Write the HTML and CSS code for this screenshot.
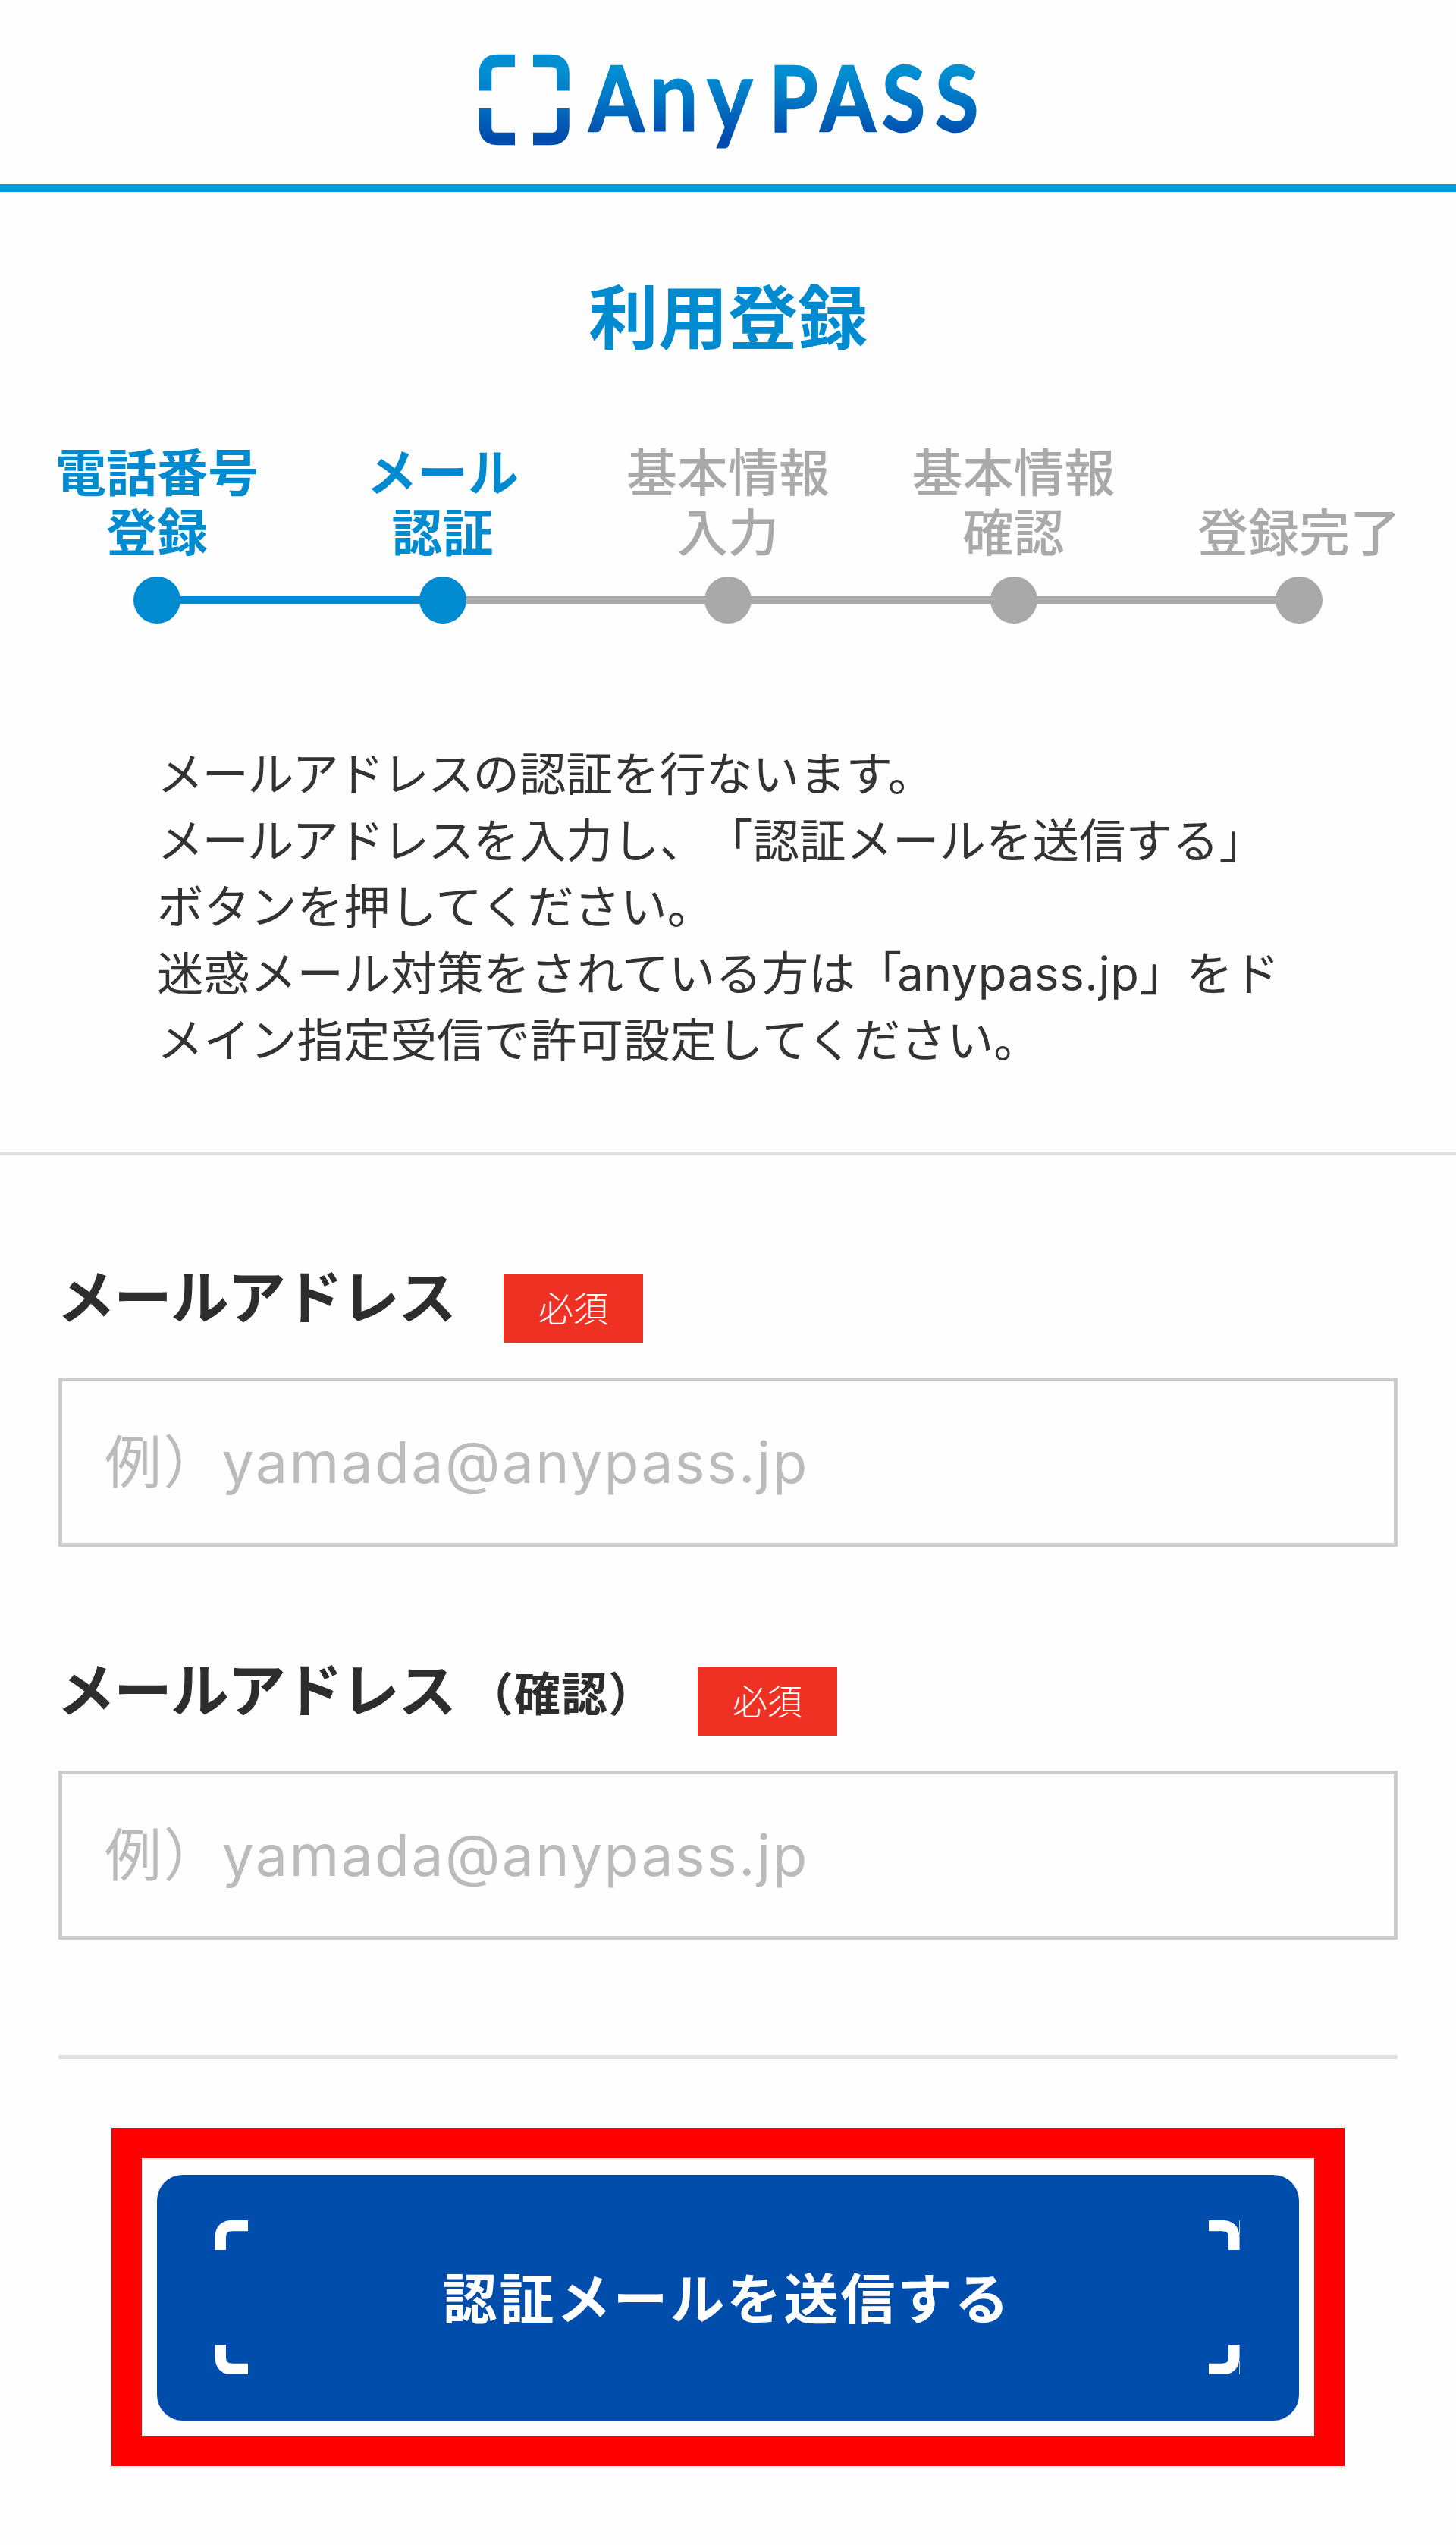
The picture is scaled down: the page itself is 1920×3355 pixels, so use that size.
FILE: index.html
```html
<!DOCTYPE html>
<html lang="ja">
<head>
    <meta charset="UTF-8">
    <meta name="viewport" content="width=device-width, initial-scale=1.0">
    <title>利用登録 | AnyPASS</title>
    <link rel="stylesheet" href="styles.css">
</head>
<body>

    <!-- ヘッダー -->
    <header class="header">
        <svg class="logo" width="712" height="190" viewBox="604 36 712 190">
            <defs>
                <linearGradient id="logoColor" gradientUnits="userSpaceOnUse" x1="0" y1="94" x2="0" y2="182">
                    <stop offset="0" stop-color="#008fd3"/>
                    <stop offset="0.35" stop-color="#007bc7"/>
                    <stop offset="1" stop-color="#004bad"/>
                </linearGradient>
            </defs>
            <g fill="none" stroke="url(#logoColor)" stroke-width="16.5">
                <path d="M640 119.500V96Q640 80 656 80H679"/>
                <path d="M703 80H726.500Q742.500 80 742.500 96V119.500"/>
                <path d="M640 143V167Q640 183 656 183H679"/>
                <path d="M703 183H726.500Q742.500 183 742.500 167V143"/>
            </g>
            <text class="logo-text" transform="scale(0.88 1)" y="173" x="924 1009.700 1093.700 1189 1270.500 1354 1433.700" fill="url(#logoColor)">A<tspan class="logo-small">ny</tspan>PASS</text>
        </svg>
    </header>

    <h1 class="title">利用登録</h1>

    <!-- ステップ -->
    <ol class="steps">
        <li class="step done">電話番号<br>登録</li>
        <li class="step active">メール<br>認証</li>
        <li class="step">基本情報<br>入力</li>
        <li class="step">基本情報<br>確認</li>
        <li class="step">登録完了</li>
    </ol>

    <p class="lead"><span class="kana">メールアドレス</span>の認証を行ないます。<br><span class="kana">メールアドレス</span>を入力し、「認証メールを送信する」<br>ボタンを押してください。<br>迷惑メール対策をされている方は「<span class="domain">anypass.jp</span>」をド<br>メイン指定受信で許可設定してください。</p>

    <!-- 入力フォーム -->
    <form class="form">
        <div class="field">
            <label class="label" for="mail"><span class="name">メールアドレス</span><span class="required">必須</span></label>
            <input class="input" type="text" id="mail" placeholder="例）yamada@anypass.jp">
        </div>
        <div class="field">
            <label class="label" for="mailConfirm"><span class="name">メールアドレス</span><span class="sub">（確認）</span><span class="required">必須</span></label>
            <input class="input" type="text" id="mailConfirm" placeholder="例）yamada@anypass.jp">
        </div>

        <div class="submit-area">
            <div class="submit-frame">
                <button class="submit" type="button">
                    <svg class="corner" width="44" height="203" viewBox="0 0 44 203">
                        <path d="M7.700 39V23Q7.700 7 23.700 7H44M7.700 164V180Q7.700 196 23.700 196H44"/>
                    </svg>
                    <span class="submit-text">認証メールを送信する</span>
                    <svg class="corner" width="41" height="203" viewBox="0 0 41 203">
                        <path d="M0 7H17.300Q33.300 7 33.300 23V39M0 196H17.300Q33.300 196 33.300 180V164"/>
                        <path class="hairline" d="M40.500 0V18M40.500 185V203"/>
                    </svg>
                </button>
            </div>
        </div>
    </form>

</body>
</html>
```

FILE: styles.css
```css
* {
    box-sizing: border-box;
}
body {
    margin: 0;
    background-color: #fefefe;
    color: #333;
    font-family: Inter, "Noto Sans CJK JP", sans-serif;
    text-spacing-trim: space-all;
}
.header {
    height: 253px;
    padding-top: 36px;
    border-bottom: 10px solid #009ddb;
    text-align: center;
}
.logo {
    display: block;
    margin: 0 auto;
}
.logo-text {
    font-family: Lato, sans-serif;
    font-size: 118px;
    font-weight: 700;
    text-anchor: middle;
    stroke: url(#logoColor);
    stroke-width: 2.5px;
}
.logo-small {
    font-size: 132px;
    stroke-width: 1px;
}
.title {
    margin: 113px 0 0;
    font-size: 92px;
    line-height: 108px;
    font-weight: 700;
    text-align: center;
    color: #008bd0;
}

/* ステップ */
.steps {
    display: grid;
    grid-template-columns: repeat(5, 376.5px);
    justify-content: center;
    align-items: end;
    margin: 110px 0 0;
    padding: 0;
    list-style: none;
}
.step {
    position: relative;
    padding-bottom: 80px;
    font-size: 67px;
    line-height: 79px;
    font-weight: 500;
    text-align: center;
    white-space: nowrap;
    color: #a9a9a9;
}
.step::before {
    content: "";
    position: absolute;
    left: 50%;
    bottom: 26px;
    width: 100%;
    height: 10px;
    background-color: #a9a9a9;
}
.step:last-child::before {
    display: none;
}
.step::after {
    content: "";
    position: absolute;
    left: 50%;
    bottom: 0;
    width: 62px;
    height: 62px;
    margin-left: -31px;
    border-radius: 50%;
    background-color: #a9a9a9;
    z-index: 1;
}
.step.done, .step.active {
    font-weight: 700;
    color: #008bd0;
}
.step.done::before, .step.done::after, .step.active::after {
    background-color: #008bd0;
}

.lead {
    margin: 0;
    padding: 155px 0 102px 207px;
    border-bottom: 5px solid #e0e0e0;
    font-size: 61.5px;
    line-height: 87.7px;
    font-weight: 400;
    white-space: nowrap;
}
.kana {
    letter-spacing: -2px;
}
.domain {
    margin-left: -6px;
    letter-spacing: 0.7px;
}

/* フォーム */
.form {
    padding: 132px 77px 0;
}
.field {
    height: 518px;
}
.label {
    display: flex;
    align-items: center;
    height: 112px;
    font-size: 77px;
    font-weight: 700;
    color: #2d2d2d;
}
.name {
    width: 539px;
    margin: -10px 0 0 -2px;
    letter-spacing: -2px;
    white-space: nowrap;
}
.sub {
    margin: 2px 6px 0 2px;
    font-size: 61px;
    letter-spacing: 1px;
}
.required {
    width: 184px;
    height: 90px;
    margin: 29px 0 0 50px;
    background-color: #ef3124;
    color: #fff;
    font-size: 46px;
    line-height: 90px;
    font-weight: 300;
    text-align: center;
}
.input {
    display: block;
    width: 100%;
    height: 223px;
    margin-top: 49px;
    padding: 0 56px;
    border: 5px solid #ccc;
    border-radius: 0;
    background-color: #fefefe;
    font-family: inherit;
    font-size: 75px;
    font-weight: 400;
    letter-spacing: 2.4px;
}
.input::placeholder {
    color: #bbb;
    opacity: 1;
}
.submit-area {
    margin-top: 18px;
    padding-top: 91px;
    border-top: 5px solid #e0e0e0;
}
.submit-frame {
    margin: 0 70px;
    padding: 22px 20px 20px;
    border: 40px solid #f00;
}
.submit {
    display: flex;
    justify-content: space-between;
    align-items: center;
    width: 100%;
    height: 324px;
    padding: 0 78px 0 76px;
    border: none;
    border-radius: 34px;
    background-color: #004dac;
    color: #fff;
    font-family: inherit;
    font-size: 72px;
    font-weight: 700;
    letter-spacing: 3px;
}
.submit-text {
    padding: 0 4px 6px 0;
}
.corner {
    fill: none;
    stroke: #fff;
    stroke-width: 14.5;
}
.hairline {
    stroke-width: 1;
    opacity: 0.7;
}
```
